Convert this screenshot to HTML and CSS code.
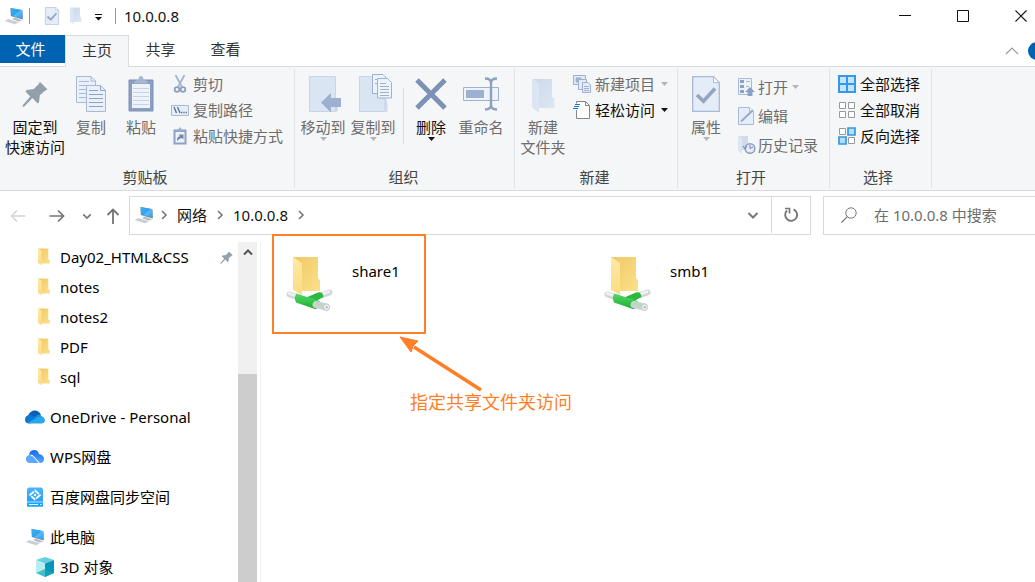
FILE: index.html
```html
<!DOCTYPE html>
<html lang="zh-CN">
<head>
<meta charset="utf-8">
<title>10.0.0.8</title>
<link rel="stylesheet" href="styles.css">
</head>
<body>
<svg class="defs" aria-hidden="true">
  <defs>
    <linearGradient id="screen" x1="0" y1="0" x2="1" y2="1"><stop offset="0" stop-color="#39b0f5"/><stop offset=".5" stop-color="#2ea3ee"/><stop offset=".52" stop-color="#57bdfb"/><stop offset="1" stop-color="#2f9df0"/></linearGradient>
    <linearGradient id="gold" x1="0" y1="0" x2="1" y2="1"><stop offset="0" stop-color="#eec965"/><stop offset="1" stop-color="#fce08a"/></linearGradient>
    <linearGradient id="cream" x1="0" y1="0" x2="0" y2="1"><stop offset="0" stop-color="#ffe9a6"/><stop offset="1" stop-color="#fbdc84"/></linearGradient>
    <linearGradient id="paleback" x1="0" y1="0" x2="1" y2="1"><stop offset="0" stop-color="#cbd9ea"/><stop offset="1" stop-color="#dde7f4"/></linearGradient>
    <linearGradient id="green" x1="0" y1="0" x2="0" y2="1"><stop offset="0" stop-color="#5ad269"/><stop offset=".4" stop-color="#3fca52"/><stop offset="1" stop-color="#1fa532"/></linearGradient>
    <linearGradient id="drive" x1="0" y1="0" x2="0" y2="1"><stop offset="0" stop-color="#4bb4ff"/><stop offset="1" stop-color="#1f98f5"/></linearGradient>
    <linearGradient id="wps" x1="0" y1="0" x2="0" y2="1"><stop offset="0" stop-color="#1668ee"/><stop offset="1" stop-color="#54a8ff"/></linearGradient>
  </defs>
  <symbol id="i-pc" viewBox="0 0 20 18">
    <path d="M6.5 1 18.5 3.2 18.8 12.4 6.8 9z" fill="#6d8596"/>
    <path d="M6.8 1 18 3 18.3 11.5 7 8.4z" fill="url(#screen)"/>
    <path d="M10 10.5 15 12 18.5 14 14 14.4 8.5 12.3z" fill="#b7bec4"/>
    <path d="M.5 14 4 12 15 15.2 11 17.5z" fill="#d4d9de"/>
    <path d="M3 14 12 16.2M4.5 13 13.4 15.4" stroke="#b5bcc3" stroke-width=".7" stroke-dasharray="1.5 .7"/>
  </symbol>
  <symbol id="i-folder" viewBox="0 0 13 18">
    <path d="M1 .5H10.8V12H12.4V15.4H2.5z" fill="url(#gold)"/>
    <path d="M.5 .5 4 2.8V17.5L.5 14.8z" fill="url(#cream)"/>
  </symbol>
  <symbol id="i-palefolder" viewBox="0 0 24 36">
    <path d="M2 1H21V19L23.5 20.5V30H3z" fill="url(#paleback)"/>
    <path d="M1 1 8 5V35L1 29.5z" fill="#dce6f3"/>
  </symbol>
  <symbol id="i-pin" viewBox="0 0 26 26">
    <path d="M17.8.8 25.5 8.6 23.3 9.4 17.8 14.2 17 21.2 15.7 22.4 10.4 17 2.4 25.5.6 26 1 24 8.2 15.4 3.5 10.5 4.8 9 11.8 8 16.8 3z" fill="#92a1a9"/>
  </symbol>
  <symbol id="i-check" viewBox="0 0 28 36">
    <path d="M.7.7H21.5L27.3 6.7V35.3H.7z" fill="#e4ecf8" stroke="#aab9d5" stroke-width="1.3"/>
    <path d="M21.5.7V6.7H27.3z" fill="#fff" stroke="#aab9d5"/>
    <path d="M5 19 11.5 25.2 23 12.5" fill="none" stroke="#94a5c2" stroke-width="3.6"/>
  </symbol>
  <symbol id="i-netfolder" viewBox="0 0 48 56">
    <path d="M8 1H33V22L35 24.500V35H12z" fill="url(#gold)"/>
    <path d="M8 1 17 7V39L8 34z" fill="url(#cream)"/>
    <path d="M4.500 38.500 14 41.500M37 39 44.500 36.500" stroke="#d3d6d8" stroke-width="6" stroke-linecap="round"/>
    <path d="M4 37.500 14 40.500M37 38 44 35.700" stroke="#f1f2f3" stroke-width="2.500" stroke-linecap="round"/>
    <path d="M20 42 33 36.500Q38 35 38.500 41L33 44 24 49z" fill="#2db840"/>
    <path d="M11.500 37.500 22 41 30 43 35 45.500Q33 53.500 30 53L11 46.500Q8.500 41 11.500 37.500z" fill="url(#green)"/>
    <path d="M31 48.500 41 51" stroke="#cdd3d4" stroke-width="7" stroke-linecap="round"/>
    <path d="M31 47 39 49" stroke="#b5dcbd" stroke-width="3"/>
    <ellipse cx="41.500" cy="51.200" rx="3" ry="3.300" fill="#f2f3f4" stroke="#c0c5c8"/>
    <ellipse cx="41.700" cy="51.200" rx="1" ry="1.400" fill="#b2b8bb"/>
  </symbol>
  <symbol id="i-chev" viewBox="0 0 10 10"><path d="M3 1 7 5 3 9" fill="none" stroke="#777" stroke-width="1.6"/></symbol>
  <symbol id="i-down" viewBox="0 0 12 12"><path d="M1.5 4 6 8.5 10.5 4" fill="none" stroke="#777" stroke-width="2"/></symbol>
  <symbol id="i-caret" viewBox="0 0 7 4"><path d="M0 0H7L3.5 4z" fill="currentColor"/></symbol>
</svg>

<div class="window">
  <header class="titlebar">
    <svg class="icon20"><use href="#i-pc"/></svg>
    <span class="rule"></span>
    <button class="quick" aria-label="属性"><svg width="16" height="18"><use href="#i-check"/></svg></button>
    <button class="quick" aria-label="新建文件夹"><svg width="13" height="18"><use href="#i-palefolder"/></svg></button>
    <button class="quick more" aria-label="自定义快速访问工具栏"><svg width="7" height="7"><path d="M0 .5H7" stroke="#111"/><path d="M0 3H7L3.5 6.5z" fill="#111"/></svg></button>
    <span class="rule"></span>
    <h1 class="title">10.0.0.8</h1>
    <div class="controls">
      <button aria-label="最小化"><svg width="12" height="12"><path d="M0 5.5H12" stroke="#111"/></svg></button>
      <button aria-label="最大化"><svg width="12" height="12"><path d="M.5.5H11.5V11.5H.5z" fill="none" stroke="#111"/></svg></button>
      <button aria-label="关闭"><svg width="12" height="12"><path d="M.5.5 11.5 11.5M11.5.5.5 11.5" stroke="#111" stroke-width="1.1"/></svg></button>
    </div>
  </header>

  <nav class="tabs">
    <button class="tab file">文件</button>
    <button class="tab active">主页</button>
    <button class="tab">共享</button>
    <button class="tab">查看</button>
    <div class="help">
      <button class="plain" aria-label="折叠功能区"><svg width="14" height="8"><path d="M1 7 7 1 13 7" fill="none" stroke="#999" stroke-width="1.2"/></svg></button>
      <button class="plain" aria-label="帮助"><svg width="18" height="18"><circle cx="9" cy="9" r="9" fill="#0063b1"/></svg></button>
    </div>
  </nav>

  <section class="ribbon">
    <div class="group">
      <div class="tools">
        <button class="big wide on"><svg width="26" height="36"><use href="#i-pin" y="5" width="26" height="26"/></svg><span>固定到<br>快速访问</span></button>
        <button class="big"><svg width="30" height="36"><g fill="#e9f0fa" stroke="#a9bad6"><path d="M.5.5H15L19.5 5V26.5H.5z"/><path d="M15 .5V5H19.5M3 5.5H13M3 9.5H16M3 13.5H10M3 17.5H10M3 21.5H10" fill="none"/><path d="M10.500 9.500H24.500L29.500 14.500V35.500H10.500z"/><path d="M24.500 9.500V14.500H29.500M13 14.500H22M13 18.500H27M13 22.500H27M13 26.500H27M13 30.500H27" fill="none" stroke="#8fa2c2"/></g></svg><span>复制</span></button>
        <button class="big"><svg width="26" height="36"><path d="M1 4H25V35H1z" fill="#8c9fc1" stroke="#7b90b6"/><path d="M4 8H22V32H4z" fill="#edf3fb"/><path d="M5 12.500H21M5 16.500H21M5 20.500H21M5 24.500H21M5 28.500H21" stroke="#c6d3e5"/><path d="M6 7.500Q6 4 10.500 4 10.500 0 13 0T15.500 4Q20 4 20 7.500z" fill="#a7b7d0"/></svg><span>粘贴</span></button>
        <div class="stack">
          <button class="small"><svg width="18" height="18"><path d="M4.500 0 11 12M13.500 0 7 12" stroke="#a9b8d1" stroke-width="2"/><circle cx="6" cy="14.500" r="2.300" fill="none" stroke="#8da0c0" stroke-width="1.800"/><circle cx="12" cy="14.500" r="2.300" fill="none" stroke="#8da0c0" stroke-width="1.800"/></svg>剪切</button>
          <button class="small"><svg width="18" height="18"><path d="M.5 4.500H17.500V14.500H.5z" fill="#e4edf9" stroke="#a9bad6"/><path d="M3 6 5.500 12M6.500 6 9 12" stroke="#5b708f" stroke-width="1.300"/><path d="M10 11.500H16" stroke="#5b708f" stroke-width="1.300" stroke-dasharray="1.300 1"/></svg>复制路径</button>
          <button class="small"><svg width="18" height="18"><path d="M2.500 2.500H15.500V17.500H2.500z" fill="#8fa2c3"/><path d="M4.500 5H13.500V15.500H4.500z" fill="#eef3fb"/><path d="M5.500 4Q6 2 7.500 2L9 0 10.500 2Q12 2 12.500 4z" fill="#9fb0cb"/><path d="M6 14Q5.500 10 9 9L7.500 7.500H12.500V12.500L11 11Q8 11.500 6 14z" fill="#7086ad"/></svg>粘贴快捷方式</button>
        </div>
      </div>
      <h2>剪贴板</h2>
    </div>

    <div class="group">
      <div class="tools">
        <button class="big"><svg width="28" height="37"><path d="M.5.5H26.500V35.500H.5z" fill="#dae5f4" stroke="#c7d5e8"/><path d="M26.500 22Q29 23 28.500 35.500H26.500z" fill="#c7d5e8"/><path d="M12 26.500 22 17V22H32V31H22V36.500z" fill="#9db0cf"/></svg><span>移动到</span><svg class="caret"><use href="#i-caret"/></svg></button>
        <button class="big"><svg width="28" height="36"><path d="M.5.5H26.500V35.500H.5z" fill="#dae5f4" stroke="#c7d5e8"/><path d="M25 23Q29 20 28.500 35.500H25z" fill="#cfdbed"/><g fill="#edf3fb" stroke="#9fb1ce"><path d="M13.500-1.500H24L27.500 2V17.500H13.500z"/><path d="M16 3.500H24M16 7.500H20"/><path d="M18.500 2.500H28.500L32.500 6.500V22H18.500z"/><path d="M21 7.500H27M21 10.500H30M21 13.500H30M21 16.500H30M21 19.500H30"/></g></svg><span>复制到</span><svg class="caret"><use href="#i-caret"/></svg></button>
        <span class="divider"></span>
        <button class="big on"><svg width="32" height="36"><path d="M2 4 30 32M30 4 2 32" stroke="#7d91b4" stroke-width="5"/></svg><span>删除</span><svg class="caret"><use href="#i-caret"/></svg></button>
        <button class="big"><svg width="36" height="36"><path d="M.5 11.500H35.500V24.500H.5z" fill="#edf4fd" stroke="#9fb1ce"/><path d="M3 14H21V22H3z" fill="#9db0cf"/><path d="M22 2.500Q28 2.500 28 7V29Q28 33.500 22 33.500M34 2.500Q28 2.500 28 7M28 29Q28 33.500 34 33.500" fill="none" stroke="#8ca0bf" stroke-width="2.400"/></svg><span>重命名</span></button>
      </div>
      <h2>组织</h2>
    </div>

    <div class="group">
      <div class="tools">
        <button class="big"><svg width="24" height="38"><use href="#i-palefolder" y="2" width="24" height="36"/></svg><span>新建<br>文件夹</span></button>
        <div class="stack">
          <button class="small"><svg width="18" height="18"><g fill="#e3ebf7" stroke="#9fb1ce"><path d="M.5.5H12.500V9.500H.5z"/><path d="M3 3H8V7H3z" fill="#9fb1ce"/><path d="M5.500 4.500H13.500V14.500H5.500z"/><path d="M9.500 7.500H15L17.500 10V17.500H9.500z"/><path d="M11 11.500H16M11 13.500H16M11 15.500H16"/></g></svg>新建项目<svg class="caret"><use href="#i-caret"/></svg></button>
          <button class="small on"><svg width="18" height="18"><path d="M3.500.5H12.500L16.500 4.500V17.500H3.500z" fill="#fff" stroke="#858585"/><path d="M12.500.5V4.500H16.500" fill="none" stroke="#858585"/><path d="M2 2.500H7V9H2z" fill="#f5f6f7"/><path d="M2 3.500H7M1 5.500H6M0 7.500H5" stroke="#1975c5" stroke-width="1.200"/></svg>轻松访问<svg class="caret"><use href="#i-caret"/></svg></button>
        </div>
      </div>
      <h2>新建</h2>
    </div>

    <div class="group">
      <div class="tools">
        <button class="big"><svg width="28" height="36"><use href="#i-check"/></svg><span>属性</span><svg class="caret"><use href="#i-caret"/></svg></button>
        <div class="stack loose">
          <button class="small"><svg width="18" height="18"><path d="M.5.5H13.500V16.500H.5z" fill="#edf3fb" stroke="#a9bad6"/><path d="M2 2H6V5H2zM2 7H6V10H2zM2 12H6V15H2z" fill="#8ba0c2"/><path d="M8 3.500H12M8 8.500H11" stroke="#a9bad6"/><path d="M12 9 17 14H14.500V18H9.500V14H7z" fill="#8ba0c2"/></svg>打开<svg class="caret"><use href="#i-caret"/></svg></button>
          <button class="small"><svg width="18" height="18"><path d="M.5.5H11.500L15.500 4.500V17.500H.5z" fill="#e4edf9" stroke="#a9bad6"/><path d="M11.500.5V4.500H15.500" fill="#fff" stroke="#a9bad6"/><path d="M3 14.500 15 3" stroke="#9aacc9" stroke-width="2"/></svg>编辑</button>
          <button class="small"><svg width="18" height="18"><path d="M1 0H10V14H1z" fill="#d0dced"/><path d="M0 0 4 2V18L0 15z" fill="#dde7f4"/><circle cx="12" cy="12.500" r="4.800" fill="#e4ebf6" stroke="#8ba0c2" stroke-width="1.500"/><path d="M12 9V12.500L15 11M5 10 7 13 9 10" fill="none" stroke="#7187ac"/></svg>历史记录</button>
        </div>
      </div>
      <h2>打开</h2>
    </div>

    <div class="group">
      <div class="tools">
        <div class="stack select">
          <button class="small on"><svg width="18" height="18"><path d="M1 1H17V17H1zM9 1V17M1 9H17" fill="#c4e4ff" stroke="#3398e5" stroke-width="2"/></svg>全部选择</button>
          <button class="small on"><svg width="18" height="18"><path d="M1.500 1.500H7.500V7.500H1.500zM10.500 1.500H16.500V7.500H10.500zM1.500 10.500H7.500V16.500H1.500zM10.500 10.500H16.500V16.500H10.500z" fill="#fff" stroke="#999"/></svg>全部取消</button>
          <button class="small on"><svg width="18" height="18"><path d="M1.500 1.500H7.500V7.500H1.500zM10.500 10.500H16.500V16.500H10.500z" fill="#fff" stroke="#999"/><path d="M10 1H17V8H10zM1 10H8V17H1z" fill="#b5dcfb" stroke="#3398e5" stroke-width="1.700"/></svg>反向选择</button>
        </div>
      </div>
      <h2>选择</h2>
    </div>
  </section>

  <div class="navrow">
    <button class="plain" aria-label="后退"><svg width="16" height="14"><path d="M15.500 7H1.500M7 1.500 1.500 7 7 12.500" fill="none" stroke="#d5d5d5" stroke-width="1.500"/></svg></button>
    <button class="plain" aria-label="前进"><svg width="16" height="14"><path d="M.5 7H14.500M9 1.500 14.500 7 9 12.500" fill="none" stroke="#747474" stroke-width="1.700"/></svg></button>
    <button class="plain recent" aria-label="最近位置"><svg width="10" height="10"><use href="#i-down"/></svg></button>
    <button class="plain" aria-label="向上"><svg width="14" height="18"><path d="M7 17V2.500M1.500 8 7 2.500 12.500 8" fill="none" stroke="#747474" stroke-width="1.800"/></svg></button>
    <div class="address">
      <svg class="icon20"><use href="#i-pc"/></svg>
      <svg class="chev"><use href="#i-chev"/></svg>
      <a href="#">网络</a>
      <svg class="chev"><use href="#i-chev"/></svg>
      <a href="#">10.0.0.8</a>
      <svg class="chev"><use href="#i-chev"/></svg>
      <button class="plain history" aria-label="历史位置"><svg width="12" height="12"><use href="#i-down"/></svg></button>
      <button class="plain refresh" aria-label="刷新"><svg width="16" height="16"><path d="M10.500 2.300A6 6 0 1 1 4 3.500" fill="none" stroke="#777" stroke-width="1.900"/><path d="M2 1.500H6.500V6.500" fill="none" stroke="#777" stroke-width="1.700"/></svg></button>
    </div>
    <label class="search">
      <svg width="16" height="16"><circle cx="10" cy="6" r="5.200" fill="none" stroke="#777"/><path d="M6.300 9.700.5 15.500" stroke="#777" stroke-width="1.200"/></svg>
      <input type="text" placeholder="在 10.0.0.8 中搜索" aria-label="搜索">
    </label>
  </div>

  <div class="content">
    <aside class="sidebar">
      <ul class="tree">
        <li class="child"><svg class="fold"><use href="#i-folder"/></svg>Day02_HTML&amp;CSS<svg class="pinned"><use href="#i-pin"/></svg></li>
        <li class="child"><svg class="fold"><use href="#i-folder"/></svg>notes</li>
        <li class="child"><svg class="fold"><use href="#i-folder"/></svg>notes2</li>
        <li class="child"><svg class="fold"><use href="#i-folder"/></svg>PDF</li>
        <li class="child"><svg class="fold"><use href="#i-folder"/></svg>sql</li>
        <li class="root"><svg class="icon20" viewBox="0 0 20 18"><path d="M3 8Q5 2.500 10 2.500 14 2.500 16 7L9 11z" fill="#0a5fb8"/><path d="M0 12Q0 7 5 7 8 7 13 11L5 15.500Q0 15.500 0 12z" fill="#0f78d4"/><path d="M10 9Q12 6.500 14.500 6.500L19 10 10 12z" fill="#1490df"/><path d="M2.500 15 12 9.500Q16 7.500 18.500 9.500 20 11 20 12.500 19.500 15.500 16.500 15.500H5Q3.500 15.500 2.500 15z" fill="#28a8ea"/></svg>OneDrive - Personal</li>
        <li class="root"><svg class="icon20" viewBox="0 0 20 18"><path d="M4 8Q4 2 9 2 13 2 14 6 19 7 19 11 19 15 15 15L7 7z" fill="url(#wps)"/><path d="M1 11Q1 7 5 7 7 7 10 10L15 15H5Q1 15 1 11z" fill="#5ba9ff"/><path d="M5.500 7Q8 7 10 10L14 15" fill="none" stroke="#fff"/></svg>WPS网盘</li>
        <li class="root"><svg class="icon20 disk" viewBox="0 0 20 20"><path d="M4 .5H16Q18 .5 18 3V19.500H2V3Q2 .5 4 .5z" fill="url(#drive)"/><path d="M2 15H18V18Q18 19.500 16 19.500H4Q2 19.500 2 18z" fill="#0fa9ff"/><path d="M2 15H18" stroke="#b9e2ff"/><path d="M4 17.500H13M15 17.500H16.500" stroke="#fff"/><path d="M10 3.500 15 8 10 12.500 5 8z" fill="none" stroke="#fff" stroke-width="1.800" stroke-dasharray="5.200 1.500"/><path d="M10 6.500 11.500 8 10 9.500 8.500 8z" fill="#fff"/></svg>百度网盘同步空间</li>
        <li class="root"><svg class="icon20"><use href="#i-pc"/></svg>此电脑</li>
        <li class="child"><svg class="icon20 cube" viewBox="0 0 20 20"><path d="M1 3 10 0 19 3 10 6.500z" fill="#64d1d8"/><path d="M1 3 10 6.500V20L1 16z" fill="#b8edf0"/><path d="M19 3 10 6.500V20L19 16z" fill="#0795bc"/><path d="M1 16 10 12 19 16 10 20z" fill="#12aab8" opacity=".7"/></svg>3D 对象</li>
      </ul>
      <div class="scrollbar"><svg class="scrollup" width="10" height="8"><path d="M1 6.500 5 2.500 9 6.500" fill="none" stroke="#555" stroke-width="2"/></svg><span class="thumb"></span></div>
    </aside>

    <main class="files">
      <a class="tile" href="#"><svg width="48" height="56"><use href="#i-netfolder"/></svg><span>share1</span></a>
      <a class="tile" href="#"><svg width="48" height="56"><use href="#i-netfolder"/></svg><span>smb1</span></a>
      <span class="mark"></span>
      <svg class="arrow" width="86" height="60"><path d="M82 55 15 12" stroke="#ff7f27" stroke-width="3.600"/><path d="M1 2 19 6 14 11 12 17z" fill="#ff7f27" stroke="#ff7f27"/></svg>
      <strong class="note">指定共享文件夹访问</strong>
    </main>
  </div>
</div>
</body>
</html>
```
FILE: styles.css
```css
* { box-sizing: border-box; }

body {
  margin: 0;
  background: #fff;
  color: #111;
  font: 15px/20px "Noto Sans", "Noto Sans CJK SC", sans-serif;
}

button {
  border: 0;
  padding: 0;
  margin: 0;
  background: none;
  color: inherit;
  font: inherit;
}

a { color: inherit; text-decoration: none; }
svg { flex: none; display: block; }
h1, h2 { margin: 0; font-size: 15px; font-weight: 400; }

.defs { position: absolute; width: 0; height: 0; }
.icon20 { width: 20px; height: 18px; }

.window {
  display: flex;
  flex-direction: column;
  height: 100vh;
  overflow: hidden;
}

/* Title bar */
.titlebar {
  display: flex;
  flex: none;
  align-items: center;
  height: 35px;
  padding: 0 0 3px 4px;
}
.titlebar .rule {
  width: 1px;
  height: 16px;
  margin: 0 8px 0 5px;
  background: #999;
}
.quick { display: flex; margin: 0 4px 0 6px; }
.quick + .quick { margin: 0 6px 0 5px; }
.quick + .more { margin: 2px 6px 0 7px; }
.titlebar .rule ~ .rule { margin-left: 7px; }
.controls { display: flex; margin: 0 -15px 0 auto; }
.controls button {
  display: flex;
  justify-content: center;
  width: 58px;
}

/* Ribbon tabs */
.tabs {
  display: flex;
  flex: none;
  height: 32px;
  border-bottom: 1px solid #dadbdc;
}
.tab { width: 65px; height: 28px; padding-right: 2px; color: #333; }
.tab.file { padding-right: 4px; background: #0063b1; color: #fff; }
.tab.active {
  width: 64px;
  height: 32px;
  padding: 0 0 4px;
  border: 1px solid #dadbdc;
  border-bottom: 0;
  background: #f5f6f7;
}
.help {
  display: flex;
  align-items: center;
  gap: 9px;
  margin: 0 -11px 0 auto;
}

/* Ribbon */
.ribbon {
  display: flex;
  flex: none;
  padding: 2px 0;
  border-bottom: 1px solid #dadbdc;
  background: #f5f6f7;
  color: #6d6d6d;
}
.group {
  display: flex;
  flex-direction: column;
  padding: 0 8px 0 3px;
  border-right: 1px solid #e2e3e4;
}
.group:first-child { padding: 0 11px 0 4px; }
.group:nth-child(3) { padding-right: 9px; }
.group:nth-child(4), .group:last-child { padding-right: 11px; }
.group h2 { padding: 0 0 1px 3px; text-align: center; color: #444; }
.tools { display: flex; height: 98px; }
.big {
  display: flex;
  flex-direction: column;
  align-items: center;
  width: 50px;
  padding-top: 7px;
  white-space: nowrap;
}
.big span { margin-top: auto; height: 50px; }
.big > svg:first-child { overflow: visible; }
.big.wide { width: 62px; }
.big .caret { margin-top: -30px; margin-bottom: 26px; }
.caret { width: 7px; height: 4px; color: #b5b5b5; }
.on { color: #111; }
.on .caret { color: #111; }
.divider {
  width: 1px;
  height: 56px;
  margin: 19px 2px 0 5px;
  background: #dadbdc;
}
.stack { padding: 2px 0 0 5px; }
.small {
  display: flex;
  align-items: center;
  gap: 4px;
  height: 26px;
  white-space: nowrap;
}
.loose { padding: 3px 0 0 7px; }
.loose .small { height: 29px; gap: 2px; }
.small .caret { margin-left: 2px; }

/* Navigation row */
.navrow {
  display: flex;
  flex: none;
  align-items: center;
  height: 51px;
  padding: 0 0 2px 10px;
}
.plain { display: flex; align-items: center; justify-content: center; }
.navrow > .plain { margin-right: 23px; }
.navrow > .plain:nth-child(2) { margin-right: 17px; }
.navrow > .recent { margin-right: 14px; }
.navrow > .plain:nth-child(4) { margin-right: 9px; }
.address {
  display: flex;
  flex: 1;
  align-items: center;
  height: 39px;
  padding: 0 0 1px 4px;
  border: 1px solid #d9d9d9;
}
.address a { margin: 0 8px; }
.chev { width: 10px; height: 10px; }
.address .icon20 { margin-right: 5px; }
.history { width: 36px; height: 100%; margin-left: auto; }
.refresh { width: 39px; height: 100%; border-left: 1px solid #d9d9d9; }
.search {
  display: flex;
  align-items: center;
  gap: 17px;
  width: 212px;
  height: 39px;
  margin-left: 12px;
  padding: 0 0 1px 17px;
  border: 1px solid #d9d9d9;
  border-right: 0;
}
.search input {
  flex: 1;
  min-width: 0;
  border: 0;
  padding: 0;
  background: none;
  color: #333;
  font: inherit;
  outline: 0;
}
.search input::placeholder { color: #6d6d6d; }

/* Content */
.content { display: flex; flex: 1; min-height: 0; }
.sidebar {
  display: flex;
  flex: none;
  width: 261px;
  padding-right: 3px;
  border-right: 1px solid #f3f3f3;
}
.tree {
  flex: 1;
  margin: 0;
  padding: 0;
  list-style: none;
  color: #000;
}
.tree li {
  display: flex;
  align-items: center;
  height: 30px;
  gap: 5px;
  padding-left: 25px;
}
.tree .root { margin-top: 10px; }
.tree .child { padding-left: 35px; }
.fold { width: 18px; height: 18px; margin-right: 2px; }
.disk, .cube { height: 20px; }
.pinned { width: 13px; height: 13px; margin: 0 5px 0 auto; }
.scrollbar {
  display: flex;
  flex-direction: column;
  align-items: center;
  width: 19px;
  background: #f0f0f0;
}
.scrollup { margin-top: 6px; }
.thumb {
  flex: 1;
  width: 100%;
  margin-top: 118px;
  background: #cdcdcd;
}
.files {
  position: relative;
  display: grid;
  flex: 1;
  grid-template-columns: repeat(auto-fill, 318px);
  align-content: start;
  padding: 14px 0 0 24px;
}
.tile { display: flex; gap: 19px; color: #000; }
.tile span { padding-top: 5px; }

/* Annotation over the file list */
.mark {
  position: absolute;
  left: 11px;
  top: -8px;
  width: 154px;
  height: 100px;
  border: 2px solid #ff7f27;
}
.arrow { position: absolute; left: 138px; top: 93px; }
.note {
  position: absolute;
  left: 149px;
  top: 147px;
  color: #ff7f27;
  font-size: 18px;
  font-weight: 400;
  line-height: 26px;
}
```
